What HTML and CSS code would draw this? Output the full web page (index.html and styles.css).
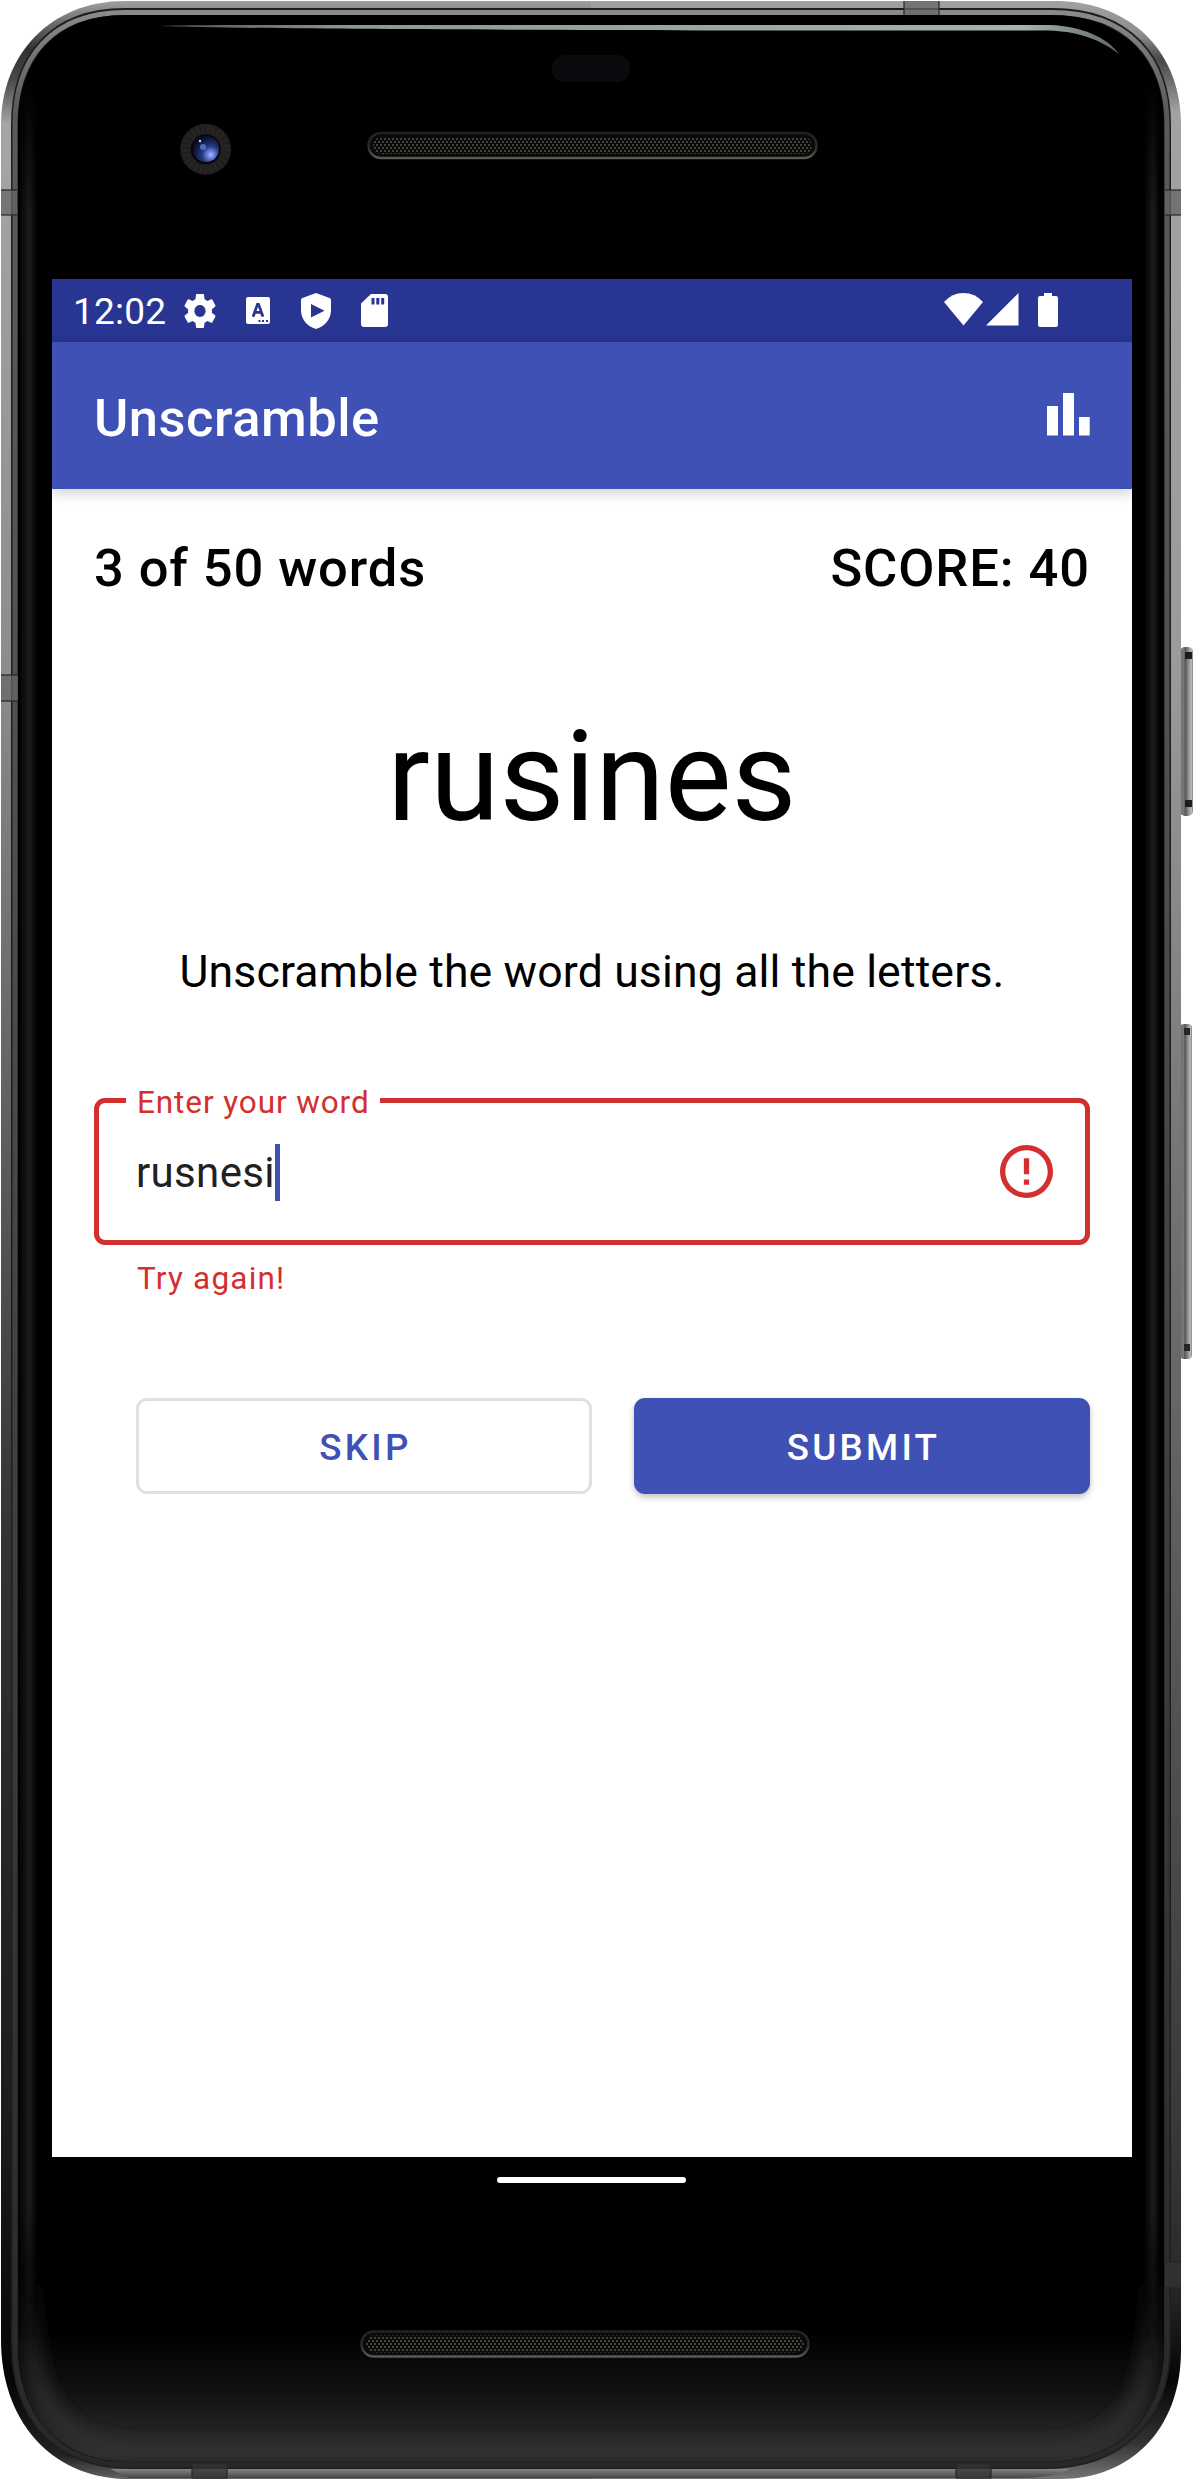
FILE: index.html
```html
<!DOCTYPE html>
<html lang="en">
<head>
<meta charset="utf-8">
<title>Unscramble</title>
<link rel="stylesheet" href="styles.css">
</head>
<body>
<div class="device">
  <svg class="hardware" viewBox="0 0 1194 2480" aria-hidden="true">
    <defs>
      <linearGradient id="rimLeft" x1="0" y1="0" x2="0" y2="2480" gradientUnits="userSpaceOnUse">
        <stop offset="0" stop-color="#a2a2a2"/><stop offset=".02" stop-color="#303030"/><stop offset=".032" stop-color="#484848"/><stop offset=".05" stop-color="#a6a6a6"/>
        <stop offset=".27" stop-color="#8c8c8c"/><stop offset=".45" stop-color="#606060"/><stop offset=".62" stop-color="#333"/><stop offset=".86" stop-color="#1b1b1b"/><stop offset=".96" stop-color="#050505"/><stop offset=".99" stop-color="#222"/><stop offset="1" stop-color="#666"/>
      </linearGradient>
      <linearGradient id="rimRight" x1="0" y1="0" x2="0" y2="2480" gradientUnits="userSpaceOnUse">
        <stop offset="0" stop-color="#a2a2a2"/><stop offset=".014" stop-color="#8c8c8c"/><stop offset=".024" stop-color="#484848"/><stop offset=".045" stop-color="#a2a2a2"/>
        <stop offset=".27" stop-color="#9a9a9a"/><stop offset=".5" stop-color="#707070"/><stop offset=".86" stop-color="#383838"/><stop offset=".92" stop-color="#292929"/><stop offset=".96" stop-color="#050505"/><stop offset=".985" stop-color="#333"/><stop offset="1" stop-color="#777"/>
      </linearGradient>
      <linearGradient id="innerRim" x1="0" y1="0" x2="0" y2="1">
        <stop offset="0" stop-color="#8a8a8a"/><stop offset=".04" stop-color="#5a5a5a"/><stop offset=".3" stop-color="#505050"/><stop offset="1" stop-color="#282828"/>
      </linearGradient>
      <linearGradient id="sheen">
        <stop offset="0" stop-color="#050505"/><stop offset=".55" stop-color="#1c1c1c"/><stop offset="1" stop-color="#000"/>
      </linearGradient>
      <linearGradient id="sheenFade" x1="0" y1="80" x2="0" y2="2340" gradientUnits="userSpaceOnUse">
        <stop offset="0" stop-color="#000"/><stop offset=".06" stop-color="#fff"/><stop offset=".94" stop-color="#fff"/><stop offset="1" stop-color="#000"/>
      </linearGradient>
      <mask id="sheenMask" maskUnits="userSpaceOnUse" x="0" y="0" width="1194" height="2480"><rect width="1194" height="2480" fill="url(#sheenFade)"/></mask>
      <linearGradient id="cornerGlow" x1="0" y1="2260" x2="0" y2="2452" gradientUnits="userSpaceOnUse">
        <stop offset="0" stop-color="#303030" stop-opacity="0"/><stop offset=".7" stop-color="#303030"/><stop offset="1" stop-color="#303030"/>
      </linearGradient>
      <linearGradient id="chin" x1="0" y1="0" x2="0" y2="1">
        <stop offset="0" stop-color="#000"/><stop offset=".45" stop-color="#101010"/><stop offset=".95" stop-color="#2e2e2e"/><stop offset="1" stop-color="#222"/>
      </linearGradient>
      <linearGradient id="glint" x1="158" x2="1119" y1="0" y2="0" gradientUnits="userSpaceOnUse">
        <stop offset="0" stop-color="#495452"/><stop offset=".2" stop-color="#8b9896"/><stop offset=".9" stop-color="#a7b1b0"/><stop offset="1" stop-color="#606969"/>
      </linearGradient>
      <linearGradient id="bottomEdge" x1="0" y1="0" x2="0" y2="1">
        <stop offset="0" stop-color="#858585"/><stop offset="1" stop-color="#454545"/>
      </linearGradient>
      <linearGradient id="key">
        <stop offset="0" stop-color="#707070"/><stop offset=".3" stop-color="#777"/><stop offset=".4" stop-color="#555"/><stop offset=".7" stop-color="#999"/><stop offset=".9" stop-color="#bbb"/><stop offset="1" stop-color="#777"/>
      </linearGradient>
      <linearGradient id="grilleEdge" x1="0" y1="0" x2="0" y2="1">
        <stop offset="0" stop-color="#222"/><stop offset=".6" stop-color="#2c2c2c"/><stop offset="1" stop-color="#5c5955"/>
      </linearGradient>
      <radialGradient id="lens" cx=".68" cy=".72" r=".75">
        <stop offset="0" stop-color="#a9b8ff"/><stop offset=".18" stop-color="#6d82dc"/><stop offset=".45" stop-color="#26377f"/><stop offset="1" stop-color="#060a22"/>
      </radialGradient>
      <pattern id="mesh" width="4" height="6" patternUnits="userSpaceOnUse">
        <path fill="#454139" d="M0 0h2v2H0zM2 3h2v2H2z"/>
      </pattern>
      <clipPath id="leftHalf"><path d="M0 0h591v2480H0z"/></clipPath>
      <clipPath id="rightHalf"><path d="M591 0h603v2480H591z"/></clipPath>
      <clipPath id="glass"><path id="face" d="M125 15H1050C1125 15 1164 60 1164 125V2345C1164 2420 1115 2462 1045 2462H130C60 2462 18 2415 18 2345V125C18 60 55 15 125 15Z"/></clipPath>
      <filter id="soft"><feGaussianBlur stdDeviation="9"/></filter>
    </defs>
    <rect x="1180" y="647" width="13" height="169" rx="5" fill="url(#key)"/>
    <path d="M1185 652h7v7h-7zM1185 800h7v7h-7z" fill="#1c1c1c"/>
    <rect x="1180" y="1024" width="12" height="335" rx="4" fill="url(#key)"/>
    <path d="M1184 1028h6v7h-6zM1184 1344h6v7h-6z" fill="#252525"/>
    <path clip-path="url(#leftHalf)" fill="url(#rimLeft)" d="M125 1H1060C1135 4 1181 55 1181 125V2350C1181 2430 1130 2479 1060 2479H125C50 2477 1 2420 1 2340V125C1 55 50 1 125 1Z"/>
    <path clip-path="url(#rightHalf)" fill="url(#rimRight)" d="M125 1H1060C1135 4 1181 55 1181 125V2350C1181 2430 1130 2479 1060 2479H125C50 2477 1 2420 1 2340V125C1 55 50 1 125 1Z"/>
    <path d="M110 2469H1070C1060 2475 1040 2478 1020 2478H130Z" fill="url(#bottomEdge)"/>
    <path d="M125 12H1052C1128 12 1167 58 1167 125V2345C1167 2422 1118 2465 1045 2465H130C57 2465 15 2418 15 2345V125C15 58 52 12 125 12Z" fill="none" stroke="#1d1d1d" stroke-width="8"/>
    <path d="M125 12.500H1052C1128 12.500 1167 58 1167 125V2345C1167 2422 1118 2465 1045 2465H130C57 2465 15 2418 15 2345V125C15 58 52 12.500 125 12.500Z" fill="none" stroke="url(#innerRim)" stroke-width="5"/>
    <use href="#face" fill="#000"/>
    <g clip-path="url(#glass)">
      <rect x="18" y="2330" width="1146" height="132" fill="url(#chin)"/>
      <path d="M30 2250V2320Q30 2452 140 2452H1045Q1152 2452 1152 2320V2250" fill="none" stroke="url(#cornerGlow)" stroke-width="16" filter="url(#soft)"/>
      <g mask="url(#sheenMask)">
        <rect x="20" y="80" width="17" height="2260" fill="url(#sheen)"/>
        <rect x="1145" y="80" width="15" height="2260" fill="url(#sheen)"/>
      </g>
    </g>
    <path d="M158 26C190 24.500 300 25 400 25H1050C1082 26 1108 38 1119 54C1096 36 1070 30.500 1045 30.500H700C520 30 250 29 158 26Z" fill="url(#glint)"/>
    <g fill="#666" fill-opacity=".75">
      <path d="M1 190H17V215H1zM1 675H18V701H1zM1165 190H1181V215H1165zM904 1H939V15H904z"/>
      <path d="M1165 2262H1181V2288H1165zM192 2464H227V2479H192zM956 2464H991V2479H956z" fill="#333"/>
    </g>
    <path d="M1 190H17M1 215H17M1 675H18M1 701H18M1165 190H1181M1165 215H1181M904 1V15M939 1V15M1165 2262H1181M1165 2288H1181M192 2464V2478M227 2464V2478M956 2464V2478M991 2464V2478" stroke="#262626" stroke-opacity=".8" stroke-width="1.500"/>
    <rect x="552" y="55" width="78" height="27" rx="13" fill="#090b0e"/>
    <circle cx="205.700" cy="149.300" r="25.500" fill="#211e1e"/>
    <circle cx="205.700" cy="149.300" r="20" fill="none" stroke="#292525" stroke-width="8" stroke-dasharray="2 3"/>
    <circle cx="205.700" cy="149.300" r="15" fill="#08080c"/>
    <circle cx="206" cy="149" r="13" fill="url(#lens)"/>
    <circle cx="203" cy="147" r="3" fill="#526bc5"/>
    <circle cx="200" cy="141" r="1.200" fill="#cbd3ff"/>
    <g fill="#0a0a0a" stroke="url(#grilleEdge)" stroke-width="2.500">
      <rect x="368.500" y="133" width="448" height="25" rx="12.500"/>
      <rect x="361.500" y="2331.500" width="447" height="25" rx="12.500"/>
    </g>
    <rect x="373" y="137" width="439" height="17" rx="8.500" fill="url(#mesh)"/>
    <rect x="366" y="2335.500" width="438" height="17" rx="8.500" fill="url(#mesh)"/>
  </svg>

  <main class="screen">
    <header class="status-bar">
      <span class="clock">12:02</span>
      <div class="status-left">
        <svg class="gear" viewBox="2 2 20 20" preserveAspectRatio="none"><path fill="#fff" d="M19.430 12.980c.040-.320.070-.640.070-.980s-.030-.660-.070-.980l2.110-1.650c.190-.150.240-.420.120-.640l-2-3.460c-.120-.220-.390-.300-.610-.220l-2.490 1c-.520-.400-1.080-.730-1.690-.980l-.380-2.650C14.460 2.180 14.250 2 14 2h-4c-.250 0-.460.180-.490.420l-.380 2.650c-.610.250-1.170.590-1.690.980l-2.490-1c-.230-.090-.490 0-.610.220l-2 3.460c-.130.220-.070.490.120.640l2.110 1.650c-.040.320-.070.650-.070.980s.030.660.070.980l-2.110 1.650c-.190.150-.240.420-.120.640l2 3.460c.120.220.390.300.610.220l2.490-1c.520.400 1.080.730 1.690.980l.380 2.650c.030.240.240.420.490.420h4c.250 0 .460-.180.490-.420l.380-2.650c.610-.250 1.170-.590 1.690-.980l2.490 1c.230.090.490 0 .610-.220l2-3.460c.120-.220.070-.490-.120-.640l-2.110-1.650zM12 15.500c-1.930 0-3.500-1.570-3.500-3.500s1.570-3.500 3.500-3.500 3.500 1.570 3.500 3.500-1.570 3.500-3.500 3.500z"/></svg>
        <svg class="input-method" viewBox="0 0 24 27"><path fill="#fff" fill-rule="evenodd" d="M2 0H22Q24 0 24 2V25Q24 27 22 27H2Q0 27 0 25V2Q0 0 2 0ZM10.500 6L6 18.500Q6 20 7.500 20Q8.700 20 9 18.800L9.700 16.800H14.300L15 18.800Q15.500 20 16.700 20Q18.200 19.800 18 18.500L13.500 6ZM12 9.700L13.500 14H10.500ZM12.500 23h2v2h-2zM16 23h2v2h-2zM20 23h2v2h-2z"/></svg>
        <svg class="shield" viewBox="0 0 30 36"><path fill="#fff" fill-rule="evenodd" d="M15 0L28.500 5Q30 5.500 30 7V17C30 26 24 33.500 15 36C6 33.500 0 26 0 17V7Q0 5.500 1.500 5ZM10 11V24.500L23.500 17.700Z"/></svg>
        <svg class="sd-card" viewBox="0 0 27 33"><path fill="#fff" fill-rule="evenodd" d="M10 0H24Q27 0 27 3V30Q27 33 24 33H3Q0 33 0 30V9.500ZM10.500 4V10.500H13.500V4ZM15.300 4V10.500H18.300V4ZM20.200 4V10.500H23.200V4Z"/></svg>
      </div>
      <div class="status-right">
        <svg class="wifi" viewBox="0 0 39 33"><path fill="#fff" d="M0 9Q8 0 19.500 0Q31 0 39 9L19.500 32.500Z"/></svg>
        <svg class="signal" viewBox="0 0 33 33"><path fill="#fff" d="M0 32.500L32.500 0V32.500Z"/></svg>
        <svg class="battery" viewBox="0 0 20 34"><path fill="#fff" d="M6 0H14V3H18Q20 3 20 5V32Q20 34 18 34H2Q0 34 0 32V5Q0 3 2 3H6Z"/></svg>
      </div>
    </header>

    <div class="app-bar">
      <h1 class="app-title">Unscramble</h1>
      <svg class="chart" viewBox="0 0 43 43"><path fill="#fff" d="M0 13H11V42.500H0zM16 0H27V42.500H16zM32 24H42.700V42.500H32z"/></svg>
    </div>

    <section class="game">
      <div class="stats"><span>3 of 50 words</span><span>SCORE: 40</span></div>
      <p class="word">rusines</p>
      <p class="hint">Unscramble the word using all the letters.</p>

      <fieldset class="field">
        <legend class="field-label">Enter your word</legend>
        <span class="field-value">rusnesi</span><span class="caret"></span>
        <svg class="error-icon" viewBox="2 2 20 20"><path fill="#d32f2f" d="M11 15h2v2h-2zm0-8h2v6h-2zm.990-5C6.470 2 2 6.480 2 12s4.470 10 9.990 10C17.520 22 22 17.520 22 12S17.520 2 11.990 2zM12 20c-4.420 0-8-3.580-8-8s3.580-8 8-8 8 3.580 8 8-3.580 8-8 8z"/></svg>
      </fieldset>
      <p class="error-text">Try again!</p>

      <div class="actions">
        <button class="button button-outline">SKIP</button>
        <button class="button button-solid">SUBMIT</button>
      </div>
    </section>
  </main>
  <div class="home-pill"></div>
</div>
</body>
</html>
```
FILE: styles.css
```css
* { box-sizing: border-box; }
body { margin: 0; background: #fff; font-family: Roboto, sans-serif; }
p, h1 { margin: 0; }
svg { display: block; }

.device { position: relative; width: 1194px; height: 2480px; padding: 279px 62px 0 52px; overflow: hidden; }
.hardware { position: absolute; inset: 0; width: 1194px; height: 2480px; }

.screen { position: relative; width: 1080px; height: 1878px; background: #fff; overflow: hidden; }

.status-bar { display: flex; align-items: flex-start; height: 63px; padding: 0 74px 0 21px; background: #283593; }
.clock { width: 111px; font-size: 37px; line-height: 43px; padding-top: 11px; color: #fff; letter-spacing: .2px; white-space: nowrap; }
.status-left, .status-right { display: flex; align-items: flex-start; padding-top: 14px; }
.gear { width: 32px; height: 34px; margin-top: 1px; }
.input-method { width: 24px; height: 27px; margin: 4px 0 0 30px; }
.shield { width: 30px; height: 36px; margin-left: 31px; }
.sd-card { width: 27px; height: 33px; margin: 1px 0 0 30px; }
.status-right { margin-left: auto; }
.wifi { width: 39px; height: 33px; }
.signal { width: 33px; height: 33px; margin-left: 3px; }
.battery { width: 20px; height: 34px; margin-left: 19px; }

.app-bar { display: flex; align-items: center; justify-content: space-between; height: 147px; padding: 0 42px; background: #3f51b5; box-shadow: 0 3px 14px rgba(0, 0, 0, .22); }
.app-title { padding-top: 4px; font-size: 52.5px; line-height: 62px; font-weight: 500; letter-spacing: .5px; color: #fff; }
.chart { width: 43px; height: 43px; margin-top: -2px; }

.game { display: flex; flex-direction: column; padding: 44px 42px 0 42px; color: #000; }
.stats { display: flex; justify-content: space-between; font-size: 52.5px; line-height: 70px; font-weight: 500; letter-spacing: .9px; }
.word { margin-top: 99px; font-size: 126px; line-height: 150px; text-align: center; }
.hint { margin-top: 93px; font-size: 44.600px; line-height: 54px; letter-spacing: .14px; text-align: center; white-space: nowrap; }

.field { display: flex; align-items: flex-start; height: 165px; margin: 81px 0 0; min-width: 0; padding: 23px 32px 0 37px; border: 5px solid #d32f2f; border-radius: 11px; }
.field-label { height: 41px; margin-left: -10px; padding: 5px 10px 0 11px; font-size: 31.500px; line-height: 36px; letter-spacing: .9px; color: #d32f2f; }
.field-value { font-size: 42px; line-height: 57px; letter-spacing: .35px; color: #212121; }
.caret { width: 5px; height: 57px; background: #3f51b5; }
.error-icon { width: 53px; height: 53px; margin: 1px 0 0 auto; }
.error-text { margin: 15px 0 0 43px; font-size: 31.500px; line-height: 37px; letter-spacing: 1.200px; color: #d32f2f; }

.actions { display: grid; grid-template-columns: 1fr 1fr; gap: 42px; margin: 101px 0 0 42px; }
.button { height: 96px; padding: 3px 0 0 3px; border: 0; border-radius: 11px; font: 500 36.750px/43px Roboto, sans-serif; letter-spacing: 3.280px; }
.button-outline { border: 3px solid #e0e0e0; background: #fff; color: #3f51b5; }
.button-solid { background: #3f51b5; color: #fff; box-shadow: 0 3px 6px rgba(0, 0, 0, .25); }

.home-pill { position: relative; width: 189px; height: 6px; margin: 20px auto 0; left: -1px; border-radius: 3px; background: #fff; }
```
